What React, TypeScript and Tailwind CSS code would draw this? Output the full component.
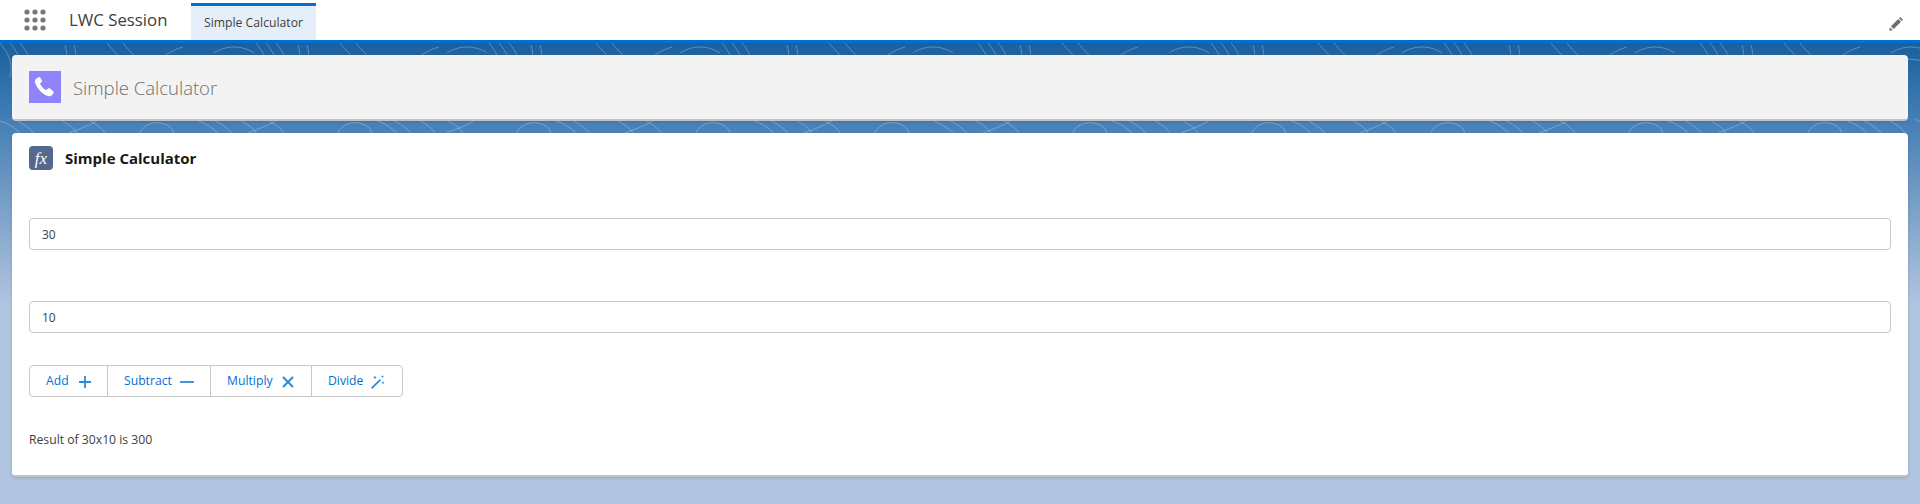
import React from "react";

const topo: string[] = [];
for (let i = 0; i < 40; i++) {
  const x = i * 48 + ((i * 17) % 23);
  const k = (i * 7) % 5;
  if (k === 0) {
    topo.push(`M${x} 0c8 10 14 20 10 34`, `M${x + 10} 0c8 10 14 20 10 34`, `M${x + 20} 0c8 10 14 20 10 34`);
  } else if (k === 1) {
    topo.push(`M${x} 34c4-12 14-24 34-30`, `M${x + 12} 34c2-8 10-18 24-22`);
  } else if (k === 2) {
    topo.push(`M${x} 2c3 10 2 20-2 32`, `M${x + 9} 2c3 10 2 20-2 32`);
  } else if (k === 3) {
    topo.push(`M${x} 10c12-8 28-8 40 0`, `M${x - 4} 22c16-8 32-8 48 2`);
  } else {
    topo.push(`M${x} 0c10 12 20 22 36 30`, `M${x + 16} 0c8 10 14 16 26 22`);
  }
}
for (let i = 0; i < 42; i++) {
  const x = i * 46 + ((i * 13) % 19);
  const k = (i * 3) % 4;
  if (k === 0) topo.push(`M${x} 78c8 2 16 8 22 14`, `M${x + 12} 76c8 2 16 8 22 14`);
  else if (k === 1) topo.push(`M${x} 92c2-8 12-14 22-12c10 2 14 8 12 12`);
  else if (k === 2) topo.push(`M${x} 76c-4 4-14 8-30 14`);
  else topo.push(`M${x} 76c10 6 14 8 18 14`, `M${x + 28} 76c10 6 14 8 18 14`);
}

function Dots() {
  const pts = [0, 1, 2];
  return (
    <svg width="22" height="22" viewBox="0 0 22 22" className="block">
      {pts.map((r) =>
        pts.map((c) => <circle key={`${r}${c}`} cx={3 + c * 8} cy={3 + r * 8} r="2.6" fill="#7a7876" />)
      )}
    </svg>
  );
}

export default function App() {
  const btn = "flex items-center h-[30px] text-[12.2px] text-[#0070d2] border-l border-[#c9c7c5] first:border-l-0";
  return (
    <div className="w-[1920px] h-[504px] overflow-hidden bg-white font-['Open_Sans','Noto_Sans',sans-serif]">
      <header className="h-[40px] flex items-stretch bg-white">
        <div className="w-[69px] pl-[24px] flex items-center">
          <Dots />
        </div>
        <div className="w-[122px] flex items-center text-[16.8px] text-[#3e3e3c] pb-[1px]">LWC Session</div>
        <div className="mt-[3px] w-[125px] border-t-[3px] border-[#0070d2] bg-[#e5eff9] flex items-center justify-center text-[12.2px] text-[#3e3e3c]">
          Simple Calculator
        </div>
        <div className="ml-auto w-[30px] mr-[9px] flex items-center justify-center">
          <svg width="16" height="16" viewBox="0 0 16 16" className="mt-[8px]">
            <path d="M1.200 14.800l.8-3.600 2.800 2.800z M3 10.200l7.200-7.200 2.800 2.800-7.200 7.200z M11 2.200l1.200-1.200 2.800 2.800-1.200 1.200z" fill="#706e6b" />
          </svg>
        </div>
      </header>
      <main className="relative h-[464px] border-t-[3px] border-[#0070d2] bg-[linear-gradient(180deg,#1b5f9e_0px,#3f7cb4_70px,#7ea2c9_170px,#b0c4df_260px)] px-[12px] pt-[12px]">
        <svg className="absolute left-0 top-0 pointer-events-none" width="1920" height="100" viewBox="0 0 1920 100" fill="none" stroke="#ffffff" strokeOpacity="0.28">
          {topo.map((d, i) => (
            <path key={i} d={d} />
          ))}
        </svg>
        <section className="relative h-[66px] bg-[#f3f3f3] rounded-[4px] border-b-2 border-[#c4c4c4] shadow-[0_1px_2px_rgba(0,0,0,0.1)] flex items-center pl-[17px]">
          <div className="w-[32px] h-[32px] bg-[#9084fc] flex items-center justify-center">
            <svg width="24" height="24" viewBox="0 0 24 24">
              <path
                d="M7.200 2.600c-.6-.7-1.600-.8-2.300-.2L3 4c-1 .9-1.300 2.300-.9 3.500 1.700 5.700 7.200 11.500 12.900 13.600 1.300.5 2.800.2 3.800-.8l1.500-1.700c.6-.7.6-1.700-.1-2.300l-3.300-2.700c-.7-.5-1.600-.5-2.200.1l-1.500 1.500c-2.800-1.300-5-3.700-6.300-6.600l1.500-1.400c.6-.6.7-1.500.2-2.200z"
                fill="#ffffff"
              />
            </svg>
          </div>
          <div className="ml-[12px] pt-[2px] text-[18.500px] font-light text-[#706e6b]">Simple Calculator</div>
        </section>
        <section className="relative mt-[12px] h-[344px] bg-white rounded-[4px] border-b-2 border-[#c4c4c4] shadow-[0_1px_3px_rgba(0,0,0,0.15)] px-[17px]">
          <div className="pt-[13px] flex items-center h-[37px]">
            <div className="w-[24px] h-[24px] rounded-[4px] bg-[#54698d] flex items-center justify-center font-['Liberation_Serif',serif] italic text-white text-[17px] leading-none">
              fx
            </div>
            <h2 className="ml-[12px] text-[15px] font-bold text-[#181818]">Simple Calculator</h2>
          </div>
          <div className="mt-[48px] h-[32px] w-full border border-[#c9c7c5] rounded-[4px] flex items-center pl-[12px] pt-[1px] text-[12px] text-[#3e3e3c]">30</div>
          <div className="mt-[51px] h-[32px] w-full border border-[#c9c7c5] rounded-[4px] flex items-center pl-[12px] pt-[1px] text-[12px] text-[#3e3e3c]">10</div>
          <div className="mt-[32px] inline-flex h-[32px] border border-[#c9c7c5] rounded-[4px] bg-white align-top">
            <div className={`${btn} w-[77px] pl-[16px]`}>
              Add
              <svg className="ml-[9px] mt-[2px]" width="14" height="14" viewBox="0 0 14 14" stroke="#2b8ad8" strokeWidth="1.800" fill="none"><path d="M7 1v12M1 7h12" /></svg>
            </div>
            <div className={`${btn} w-[103px] pl-[16px]`}>
              Subtract
              <svg className="ml-[8px] mt-[2px]" width="14" height="14" viewBox="0 0 14 14" stroke="#2b8ad8" strokeWidth="1.800" fill="none"><path d="M0 7h14" /></svg>
            </div>
            <div className={`${btn} w-[101px] pl-[16px]`}>
              Multiply
              <svg className="ml-[9px] mt-[2px]" width="12" height="12" viewBox="0 0 12 12" stroke="#2b8ad8" strokeWidth="1.900" fill="none"><path d="M1 1l10 10M11 1L1 11" /></svg>
            </div>
            <div className={`${btn} w-[91px] pl-[16px]`}>
              Divide
              <svg className="ml-[8px] mt-[1px]" width="14" height="14" viewBox="0 0 14 14" fill="#2b8ad8">
                <path d="M0 12.800l8.800-8.800 1.200 1.200L1.200 14z" />
                <path d="M4 0.500l.6 1.400 1.400.6-1.400.6-.6 1.400-.6-1.400-1.400-.6 1.400-.6z M11.500 0l.4 1.100 1.100.4-1.100.4-.4 1.100-.4-1.100-1.100-.4 1.100-.4z M12 6l.5 1.200 1.200.5-1.200.5-.5 1.200-.5-1.200-1.200-.5 1.200-.5z" />
              </svg>
            </div>
          </div>
          <p className="mt-[34px] text-[12.200px] leading-[18px] text-[#3e3e3c]">Result of 30x10 is 300</p>
        </section>
      </main>
    </div>
  );
}
